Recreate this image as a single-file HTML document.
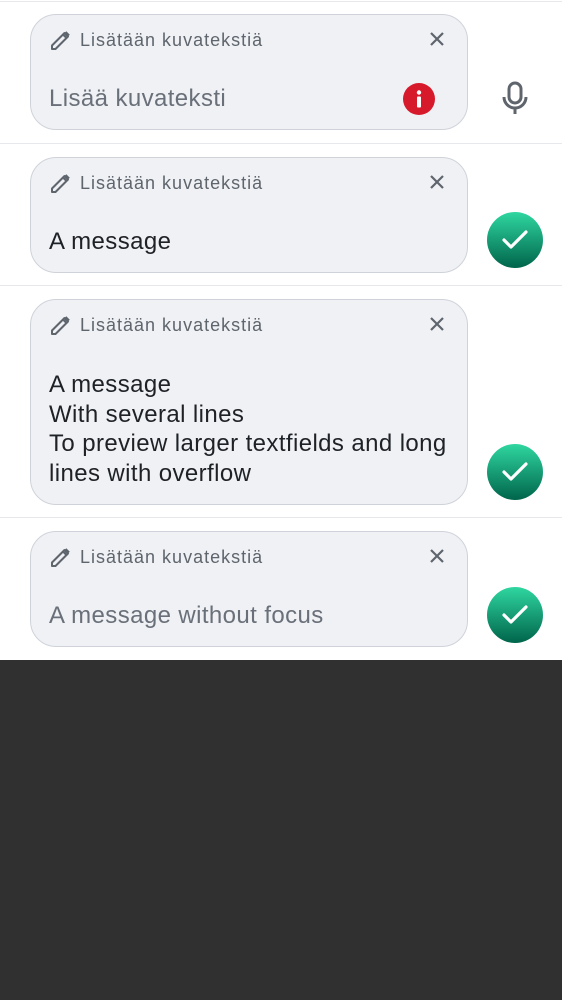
<!DOCTYPE html><html><head><meta charset="utf-8"><style>
body{margin:0;width:562px;height:1000px;background:#303030;font-family:"Liberation Sans",sans-serif;position:relative;overflow:hidden}
.top{position:absolute;left:0;top:0;width:562px;height:660px;background:#fff}
.sep{position:absolute;left:0;width:562px;height:1px;background:#e6e8ec}
.box{position:absolute;left:30px;width:438px;background:#eff1f5;border:1px solid #cfd3d9;border-radius:26px;box-sizing:border-box}
.lab{position:absolute;left:49px;top:15px;font-size:18px;color:#5f656d;letter-spacing:1px}
.pen{position:absolute;left:18px;top:13px}
.x{position:absolute;right:22px;top:16px}
.txt{position:absolute;left:18px;font-size:24px;color:#1e2126;line-height:29.5px;letter-spacing:0.4px}
.ok{position:absolute;left:487px;width:56px;height:56px;border-radius:50%;background:linear-gradient(#2fd6a0,#00654b)}
.ok svg{position:absolute;left:14px;top:14px}
</style></head><body>
<div class="top"></div>
<div class="sep" style="top:1px"></div><div class="sep" style="top:143px"></div><div class="sep" style="top:285px"></div><div class="sep" style="top:517px"></div>

<div class="box" style="top:14px;height:116px">
<svg class="pen" width="24" height="24" viewBox="0 0 24 24"><path d="M3 21v-3.5L15.5 5l3.5 3.5L6.5 21H3zM14 6.5l3.5 3.5" fill="none" stroke="#5f656d" stroke-width="2" stroke-linejoin="round"/><path d="M15.5 5l1.8-1.8 3.5 3.5L19 8.5z" fill="#5f656d"/></svg>
<div class="lab">Lisätään kuvatekstiä</div>
<svg class="x" width="16" height="16" viewBox="0 0 16 16"><path d="M2 2L14 14M14 2L2 14" stroke="#5f656d" stroke-width="2.2"/></svg>
<div class="txt" style="top:69px;color:#6a7079">Lisää kuvateksti</div>
<svg style="position:absolute;left:372px;top:68px" width="32" height="32" viewBox="0 0 32 32"><circle cx="16" cy="16" r="16" fill="#d71a2b"/><circle cx="16" cy="9.5" r="2.2" fill="#fff"/><rect x="14" y="13.5" width="4" height="11" rx="1" fill="#fff"/></svg>
</div>
<svg style="position:absolute;left:499px;top:81px" width="32" height="34" viewBox="0 0 32 34"><rect x="10" y="2" width="12" height="20" rx="6" fill="none" stroke="#5f656d" stroke-width="3"/><path d="M5 16a11 11 0 0 0 22 0M16 27v6" fill="none" stroke="#5f656d" stroke-width="3"/></svg>

<div class="box" style="top:157px;height:116px">
<svg class="pen" width="24" height="24" viewBox="0 0 24 24"><path d="M3 21v-3.5L15.5 5l3.5 3.5L6.5 21H3zM14 6.5l3.5 3.5" fill="none" stroke="#5f656d" stroke-width="2" stroke-linejoin="round"/><path d="M15.5 5l1.8-1.8 3.5 3.5L19 8.5z" fill="#5f656d"/></svg>
<div class="lab">Lisätään kuvatekstiä</div>
<svg class="x" width="16" height="16" viewBox="0 0 16 16"><path d="M2 2L14 14M14 2L2 14" stroke="#5f656d" stroke-width="2.2"/></svg>
<div class="txt" style="top:69px">A message</div>
</div>
<div class="ok" style="top:212px"><svg width="28" height="28" viewBox="0 0 28 28"><path d="M3 14l7 7L25 6" fill="none" stroke="#fff" stroke-width="3.2" stroke-linecap="round" stroke-linejoin="round"/></svg></div>

<div class="box" style="top:299px;height:206px">
<svg class="pen" width="24" height="24" viewBox="0 0 24 24"><path d="M3 21v-3.5L15.5 5l3.5 3.5L6.5 21H3zM14 6.5l3.5 3.5" fill="none" stroke="#5f656d" stroke-width="2" stroke-linejoin="round"/><path d="M15.5 5l1.8-1.8 3.5 3.5L19 8.5z" fill="#5f656d"/></svg>
<div class="lab">Lisätään kuvatekstiä</div>
<svg class="x" width="16" height="16" viewBox="0 0 16 16"><path d="M2 2L14 14M14 2L2 14" stroke="#5f656d" stroke-width="2.2"/></svg>
<div class="txt" style="top:70px;white-space:nowrap">A message<br>With several lines<br>To preview larger textfields and long<br>lines with overflow</div>
</div>
<div class="ok" style="top:444px"><svg width="28" height="28" viewBox="0 0 28 28"><path d="M3 14l7 7L25 6" fill="none" stroke="#fff" stroke-width="3.2" stroke-linecap="round" stroke-linejoin="round"/></svg></div>

<div class="box" style="top:531px;height:116px">
<svg class="pen" width="24" height="24" viewBox="0 0 24 24"><path d="M3 21v-3.5L15.5 5l3.5 3.5L6.5 21H3zM14 6.5l3.5 3.5" fill="none" stroke="#5f656d" stroke-width="2" stroke-linejoin="round"/><path d="M15.5 5l1.8-1.8 3.5 3.5L19 8.5z" fill="#5f656d"/></svg>
<div class="lab">Lisätään kuvatekstiä</div>
<svg class="x" width="16" height="16" viewBox="0 0 16 16"><path d="M2 2L14 14M14 2L2 14" stroke="#5f656d" stroke-width="2.2"/></svg>
<div class="txt" style="top:69px;color:#6a7079">A message without focus</div>
</div>
<div class="ok" style="top:587px"><svg width="28" height="28" viewBox="0 0 28 28"><path d="M3 14l7 7L25 6" fill="none" stroke="#fff" stroke-width="3.2" stroke-linecap="round" stroke-linejoin="round"/></svg></div>
</body></html>
